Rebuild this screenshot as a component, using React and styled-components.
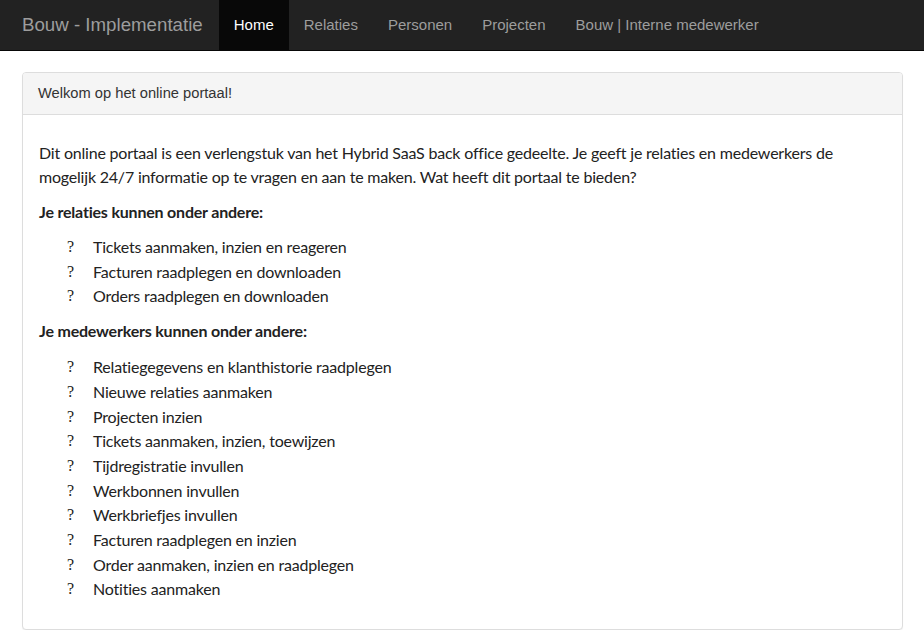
import React from 'react';
import styled, { createGlobalStyle } from 'styled-components';

const GlobalStyle = createGlobalStyle`
  html, body {
    margin: 0;
    padding: 0;
    background: #ffffff;
  }
  body {
    font-family: 'Liberation Sans', Arial, sans-serif;
    font-size: 14px;
    color: #333333;
  }
`;

const Navbar = styled.nav`
  display: flex;
  align-items: stretch;
  height: 50px;
  padding-left: 7px;
  background-color: #222222;
  border-bottom: 1px solid #080808;
`;

const Brand = styled.a`
  display: flex;
  align-items: center;
  padding: 0 16px 1px 15px;
  font-size: 18.7px;
  color: #9d9d9d;
  text-decoration: none;
`;

const NavList = styled.ul`
  display: flex;
  margin: 0;
  padding: 0;
  list-style: none;
`;

const NavLink = styled.a`
  display: flex;
  align-items: center;
  height: 100%;
  box-sizing: border-box;
  padding: 0 15px 1px;
  font-size: 15px;
  color: ${({ $active }) => ($active ? '#ffffff' : '#9d9d9d')};
  background-color: ${({ $active }) => ($active ? '#080808' : 'transparent')};
  text-decoration: none;
`;

const Main = styled.main`
  padding: 21px 21px 0 22px;
`;

const Panel = styled.section`
  border: 1px solid #dddddd;
  border-radius: 4px;
  background: #ffffff;
  box-shadow: 0 1px 1px rgba(0, 0, 0, 0.05);
`;

const PanelHeading = styled.header`
  padding: 10px 15px;
  line-height: 21px;
  font-size: 14.7px;
  color: #333333;
  background-color: #f5f5f5;
  border-bottom: 1px solid #dddddd;
  border-radius: 3px 3px 0 0;
`;

const PanelBody = styled.div`
  padding: 26px 16px 27px 16px;
  font-family: Lato, 'Open Sans', sans-serif;
  font-size: 16px;
  letter-spacing: -0.2px;
  color: #222222;
`;

const Paragraph = styled.p`
  margin: 0 0 ${({ $gap }) => $gap || 11}px;
  line-height: 24px;
  font-weight: ${({ $bold }) => ($bold ? 700 : 400)};
`;

const List = styled.ul`
  margin: 0 0 ${({ $gap }) => $gap || 0}px;
  padding: 0 0 0 28px;
  list-style: none;
`;

const Item = styled.li`
  display: flex;
  line-height: 24.7px;
`;

const Bullet = styled.span`
  width: 26px;
  flex: none;
  font-family: 'Liberation Serif', 'Times New Roman', serif;
  font-size: 16px;
  letter-spacing: 0;
`;

const navItems = ['Home', 'Relaties', 'Personen', 'Projecten', 'Bouw | Interne medewerker'];

const relaties = [
  'Tickets aanmaken, inzien en reageren',
  'Facturen raadplegen en downloaden',
  'Orders raadplegen en downloaden',
];

const medewerkers = [
  'Relatiegegevens en klanthistorie raadplegen',
  'Nieuwe relaties aanmaken',
  'Projecten inzien',
  'Tickets aanmaken, inzien, toewijzen',
  'Tijdregistratie invullen',
  'Werkbonnen invullen',
  'Werkbriefjes invullen',
  'Facturen raadplegen en inzien',
  'Order aanmaken, inzien en raadplegen',
  'Notities aanmaken',
];

const BulletList = ({ items, gap }) => (
  <List $gap={gap}>
    {items.map((text) => (
      <Item key={text}>
        <Bullet>?</Bullet>
        <span>{text}</span>
      </Item>
    ))}
  </List>
);

export default function App() {
  return (
    <>
      <GlobalStyle />
      <Navbar>
        <Brand href="#">Bouw - Implementatie</Brand>
        <NavList>
          {navItems.map((label, i) => (
            <li key={label}>
              <NavLink href="#" $active={i === 0}>{label}</NavLink>
            </li>
          ))}
        </NavList>
      </Navbar>
      <Main>
        <Panel>
          <PanelHeading>Welkom op het online portaal!</PanelHeading>
          <PanelBody>
            <Paragraph>
              Dit online portaal is een verlengstuk van het Hybrid SaaS back office gedeelte. Je geeft je relaties en medewerkers de
              mogelijk 24/7 informatie op te vragen en aan te maken. Wat heeft dit portaal te bieden?
            </Paragraph>
            <Paragraph $bold>Je relaties kunnen onder andere:</Paragraph>
            <BulletList items={relaties} gap={10} />
            <Paragraph $bold $gap={12}>Je medewerkers kunnen onder andere:</Paragraph>
            <BulletList items={medewerkers} />
          </PanelBody>
        </Panel>
      </Main>
    </>
  );
}
